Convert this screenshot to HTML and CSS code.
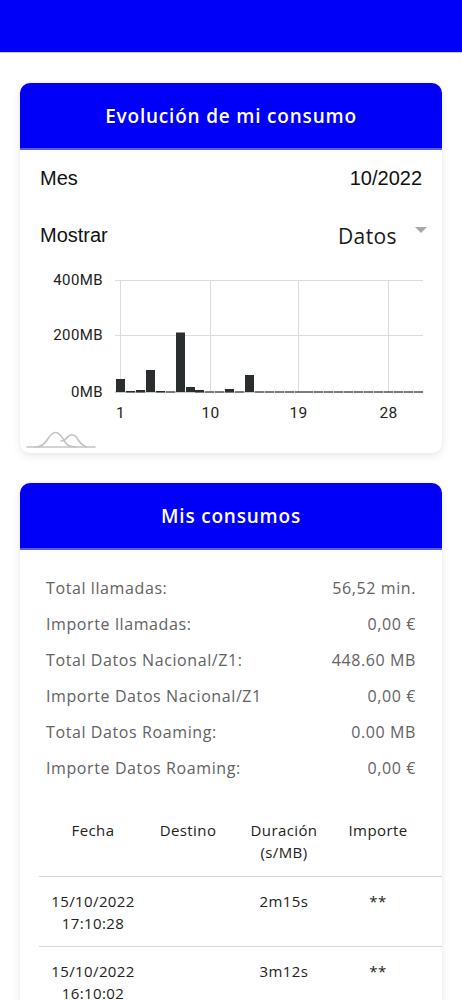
FILE: index.html
```html
<!DOCTYPE html>
<html lang="es">
<head>
<meta charset="utf-8">
<title>Consumo</title>
<link rel="stylesheet" href="styles.css">
</head>
<body>
<div class="topbar"></div>

<section class="card card-chart">
  <div class="card-head">Evolución de mi consumo</div>
  <div class="field-row mes-row">
    <span class="field-label">Mes</span>
    <span class="field-value">10/2022</span>
  </div>
  <div class="field-row mostrar-row">
    <span class="field-label">Mostrar</span>
    <span class="select"><span class="select-text">Datos</span><span class="select-caret"></span></span>
  </div>
  <svg class="chart" width="422" height="189" viewBox="0 0 422 189">
    <g stroke="#dcdcdc" stroke-width="1">
      <line x1="95" y1="16.5" x2="403" y2="16.5"/>
      <line x1="95" y1="71.5" x2="403" y2="71.5"/>
      <line x1="100.5" y1="16" x2="100.5" y2="128"/>
      <line x1="190.5" y1="16" x2="190.5" y2="128"/>
      <line x1="278.5" y1="16" x2="278.5" y2="128"/>
      <line x1="368.5" y1="16" x2="368.5" y2="128"/>
    </g>
    <line x1="95" y1="128" x2="403" y2="128" stroke="#9a9a9a" stroke-width="1"/>
    <g class="ylabels" font-family="Roboto, 'Liberation Sans', sans-serif" font-size="15" fill="#222" text-anchor="end" letter-spacing="0.4">
      <text x="83" y="21">400MB</text>
      <text x="83" y="76">200MB</text>
      <text x="83" y="133">0MB</text>
    </g>
    <g font-family="Roboto, 'Liberation Sans', sans-serif" font-size="15.5" fill="#222" text-anchor="middle" letter-spacing="0.4">
      <text x="100.5" y="154">1</text>
      <text x="190.5" y="154">10</text>
      <text x="278.5" y="154">19</text>
      <text x="368.5" y="154">28</text>
    </g>
    <g fill="#2b2e2e">
      <rect x="96" y="115" width="9" height="13"/>
      <rect x="106" y="127" width="9" height="1.5"/>
      <rect x="116" y="126" width="9" height="2.5"/>
      <rect x="126" y="106" width="9" height="22"/>
      <rect x="136" y="127" width="9" height="1.5"/>
      <rect x="146" y="127.5" width="9" height="1"/>
      <rect x="156" y="68.5" width="9" height="59.5"/>
      <rect x="166" y="123" width="9" height="5"/>
      <rect x="175" y="126" width="9" height="2.5"/>
      <rect x="185" y="127.5" width="9" height="1"/>
      <rect x="195" y="127.5" width="9" height="1"/>
      <rect x="205" y="125" width="9" height="3.5"/>
      <rect x="215" y="127.5" width="9" height="1"/>
      <rect x="225" y="111" width="9" height="17"/>
      <rect x="235" y="127.5" width="9" height="1"/>
      <rect x="245" y="127.5" width="9" height="1"/>
      <rect x="255" y="127.5" width="9" height="1"/>
      <rect x="265" y="127.5" width="9" height="1"/>
      <rect x="275" y="127.5" width="9" height="1"/>
      <rect x="284" y="127.5" width="9" height="1"/>
      <rect x="294" y="127.5" width="9" height="1"/>
      <rect x="304" y="127.5" width="9" height="1"/>
      <rect x="314" y="127.5" width="9" height="1"/>
      <rect x="324" y="127.5" width="9" height="1"/>
      <rect x="334" y="127.5" width="9" height="1"/>
      <rect x="344" y="127.5" width="9" height="1"/>
      <rect x="354" y="127.5" width="9" height="1"/>
      <rect x="364" y="127.5" width="9" height="1"/>
      <rect x="374" y="127.5" width="9" height="1"/>
      <rect x="384" y="127.5" width="9" height="1"/>
      <rect x="394" y="127.5" width="9" height="1"/>
    </g>
    <g fill="none" stroke="#c4c4c4" stroke-width="1.6" stroke-linecap="round">
      <line x1="7" y1="183" x2="75" y2="183"/>
      <path d="M15 183 Q23 183 27 176 Q32 168 36 168.5 Q40 169 45 178 Q48 183 56 183"/>
      <path d="M41 177 Q45 177 48 172.5 Q52 169 56 172.5 Q60 180 66 183"/>
    </g>
  </svg>
</section>

<section class="card card-list">
  <div class="card-head">Mis consumos</div>
  <div class="summary">
    <div class="sum-row"><span>Total llamadas:</span><span>56,52 min.</span></div>
    <div class="sum-row"><span>Importe llamadas:</span><span>0,00 €</span></div>
    <div class="sum-row"><span>Total Datos Nacional/Z1:</span><span>448.60 MB</span></div>
    <div class="sum-row"><span>Importe Datos Nacional/Z1</span><span>0,00 €</span></div>
    <div class="sum-row"><span>Total Datos Roaming:</span><span>0.00 MB</span></div>
    <div class="sum-row"><span>Importe Datos Roaming:</span><span>0,00 €</span></div>
  </div>
  <div class="table">
    <div class="trow thead">
      <div class="cell">Fecha</div>
      <div class="cell">Destino</div>
      <div class="cell">Duración<br>(s/MB)</div>
      <div class="cell">Importe</div>
      <div class="cell"></div>
    </div>
    <div class="trow">
      <div class="cell">15/10/2022<br>17:10:28</div>
      <div class="cell"></div>
      <div class="cell">2m15s</div>
      <div class="cell">**</div>
      <div class="cell"></div>
    </div>
    <div class="trow">
      <div class="cell">15/10/2022<br>16:10:02</div>
      <div class="cell"></div>
      <div class="cell">3m12s</div>
      <div class="cell">**</div>
      <div class="cell"></div>
    </div>
  </div>
</section>
</body>
</html>
```
FILE: styles.css
```css
* { box-sizing: border-box; }

html, body {
  margin: 0;
  padding: 0;
  background: #ffffff;
}

body {
  font-family: "Open Sans", "Liberation Sans", sans-serif;
  color: #222;
  width: 462px;
}

.topbar {
  height: 53px;
  background: #0000f8;
  border-bottom: 1px solid #c9c9d6;
}

.card {
  margin: 30px 20px 0;
  background: #fff;
  border-radius: 10px;
  overflow: hidden;
  box-shadow: 0 3px 10px rgba(0, 0, 0, 0.09), 0 0 3px rgba(0, 0, 0, 0.04);
}

.card-chart {
  height: 370px;
}

.card-head {
  height: 67px;
  background: #0000f8;
  border-bottom: 2px solid #5563d6;
  color: #fff;
  font-family: "Open Sans", sans-serif;
  font-weight: 600;
  font-size: 19px;
  display: flex;
  align-items: center;
  justify-content: center;
  letter-spacing: 0.8px;
}

.field-row {
  display: flex;
  align-items: center;
  justify-content: space-between;
  padding: 0 20px;
  font-family: "Liberation Sans", Arial, sans-serif;
  font-size: 20px;
  color: #111;
}

.mes-row {
  height: 56px;
}

.mostrar-row {
  height: 58px;
  padding-right: 15px;
}

.select {
  display: flex;
  align-items: center;
}

.select-text {
  font-family: "Open Sans", sans-serif;
  font-size: 21px;
  letter-spacing: 0.4px;
  color: #1a1a1a;
  margin-top: 2px;
}

.select-caret {
  width: 0;
  height: 0;
  margin-left: 18px;
  margin-top: -10px;
  border-left: 6px solid transparent;
  border-right: 6px solid transparent;
  border-top: 6px solid #aaaaaa;
}

.chart {
  display: block;
}

.summary {
  padding: 20px 26px 0;
  color: #626262;
  font-size: 16px;
}

.sum-row {
  height: 36px;
  display: flex;
  align-items: center;
  justify-content: space-between;
  letter-spacing: 0.6px;
}

.table {
  margin: 24px 0 0 19px;
  font-size: 15px;
  letter-spacing: 0.4px;
  color: #222;
}

.trow {
  display: grid;
  grid-template-columns: 108px 82px 110px 78px 1fr;
  border-bottom: 1px solid #d6d6d6;
  text-align: center;
  line-height: 22px;
  padding: 13px 0 12px;
}

.trow.thead {
  padding: 9px 0 13px;
}
```
